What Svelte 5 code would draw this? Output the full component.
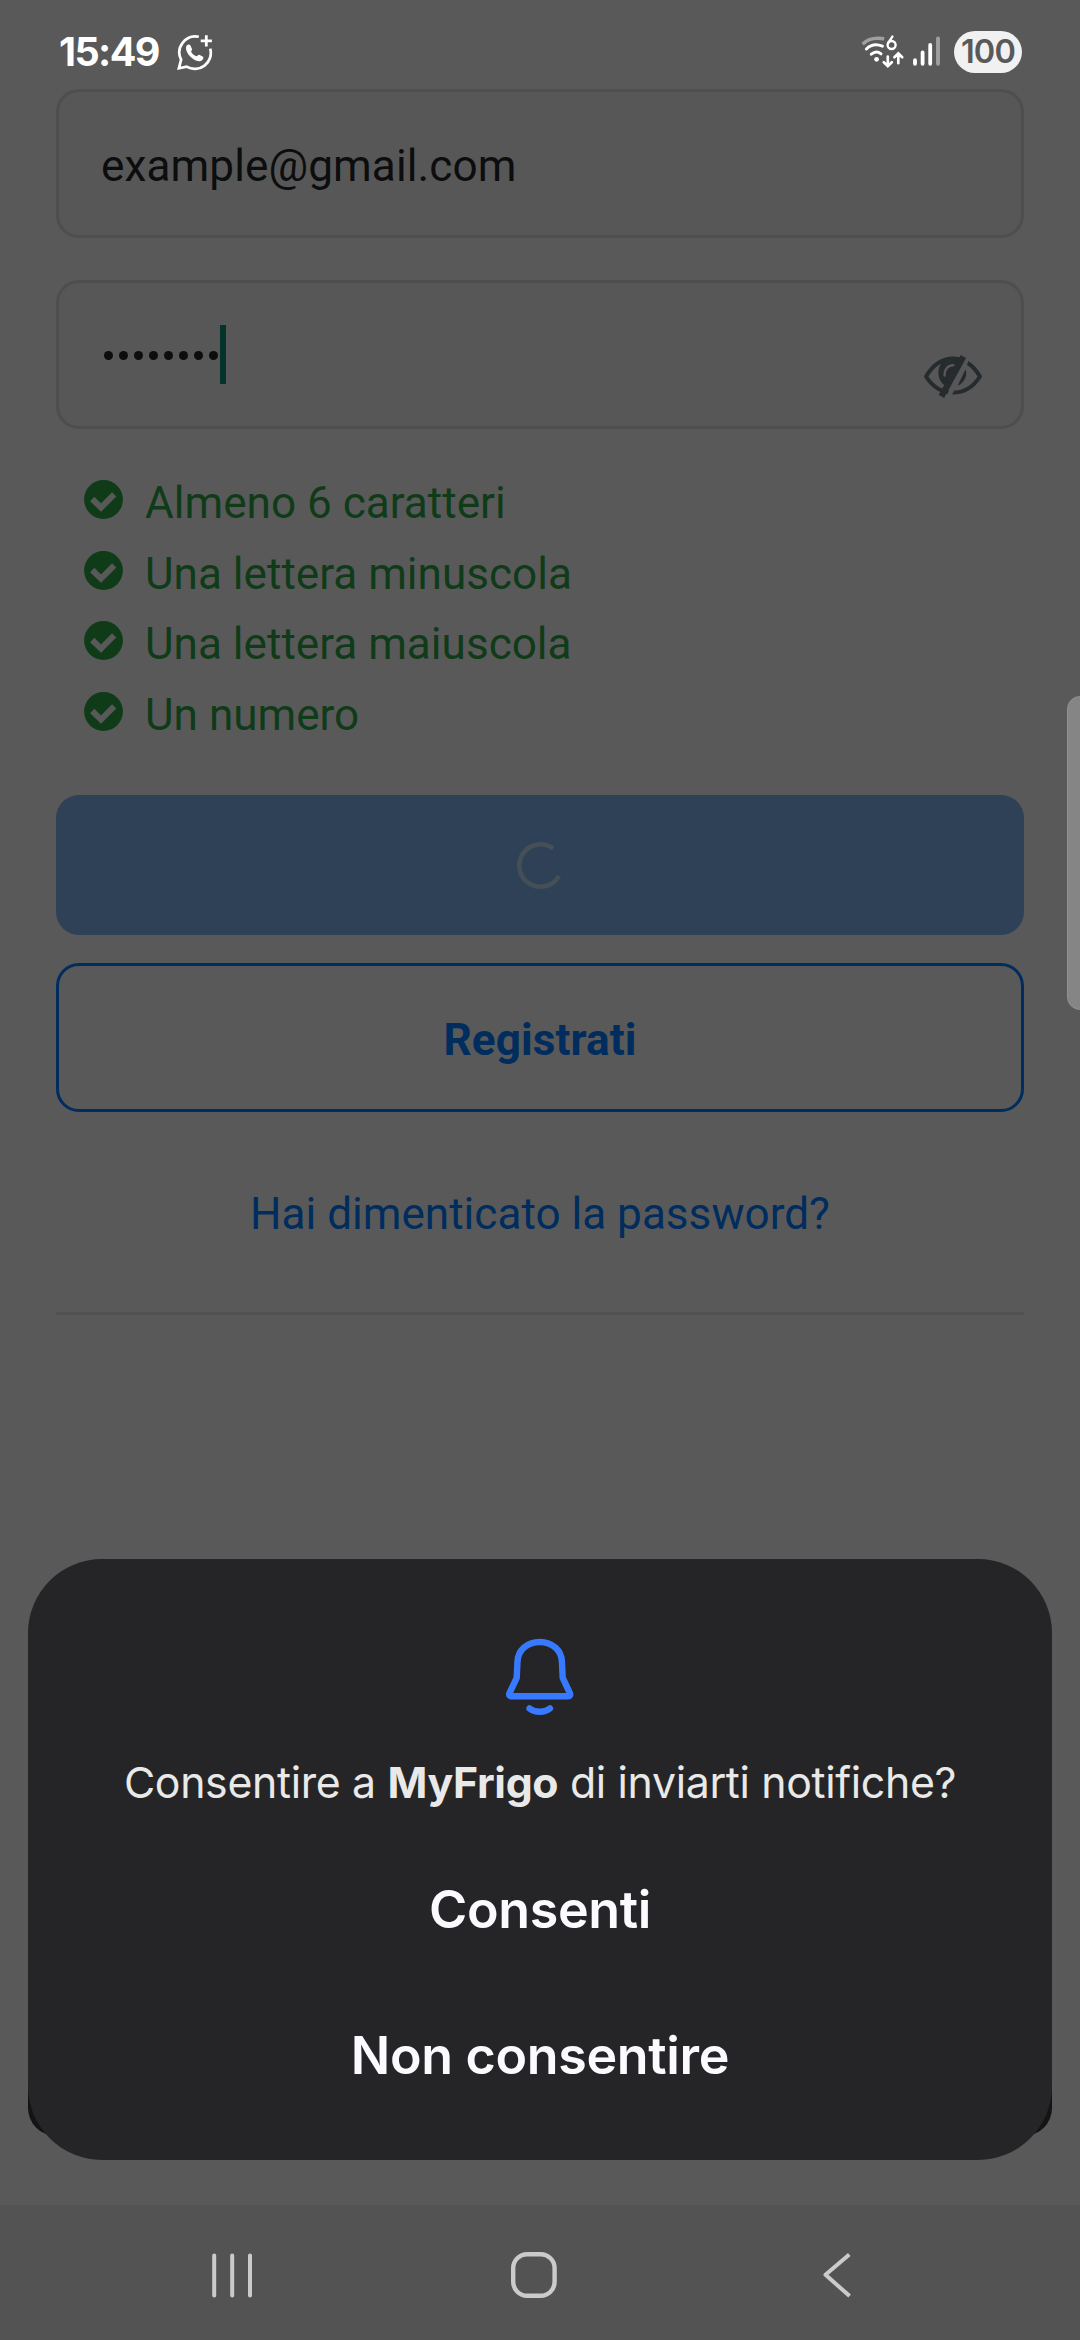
<script>
  const rules = ['Almeno 6 caratteri', 'Una lettera minuscola', 'Una lettera maiuscola', 'Un numero'];
  const dots = [0, 1, 2, 3, 4, 5, 6, 7];
</script>

<div class="screen">
  <header class="status">
    <div class="left">
      <span class="time">15:49</span>
      <svg class="wa" width="36" height="37" viewBox="0 0 36 37" fill="none">
        <path d="M21.8 2.8A16 16 0 0 0 4.1 25.6L1.9 34.3L9.6 32.7A16 16 0 0 0 33.2 14.6" stroke="#fff" stroke-width="2.7" />
        <path d="M29.3 1.3V12.5M23.7 6.9H34.9" stroke="#fff" stroke-width="2.8" />
        <path d="M9.7 11.6C10.7 10.3 12.3 10 13.3 11.2L15 15C15.3 16 13.9 17.3 14.2 18C15.6 20.2 17.4 21.5 19.3 22.2C20.2 22.4 21.3 20.4 22.4 20.8L26 22.7C27.1 23.6 25.9 26 24.3 26.8C20.6 28.5 16 25.5 13.4 22.8C10.5 19.9 7.7 15 9.7 11.6Z" fill="#fff" />
      </svg>
    </div>
    <div class="right">
      <svg width="84" height="38" viewBox="0 0 84 38" fill="none" stroke-linecap="round">
        <path d="M3.6 11.2C9 5.7 17 4.4 25.2 5.8" stroke="#a0a0a0" stroke-width="3.4" stroke-linecap="butt" />
        <path d="M7.4 16C12 11.5 18 11 23.4 13.2" stroke="#fff" stroke-width="3" />
        <path d="M12.3 21.2C15.8 18.3 19 18.4 22 20.9" stroke="#fff" stroke-width="3" />
        <circle cx="17.6" cy="26.3" r="2.4" fill="#fff" />
        <circle cx="32.6" cy="12" r="4" stroke="#fff" stroke-width="2.4" />
        <path d="M29.2 10L33.4 3.6" stroke="#fff" stroke-width="2.4" />
        <path d="M28.8 23.5V33M24.8 29.3L28.8 33.2L32.8 29.3M39.3 30.2V20.7M35.4 24.2L39.3 20.4L43.2 24.2" stroke="#fff" stroke-width="2.7" />
        <path d="M56 27.2V30.8M63.6 19.3V30.8M71.2 12V30.8" stroke="#fff" stroke-width="3.8" />
        <path d="M79 5.3V30.8" stroke="#a0a0a0" stroke-width="3.8" />
      </svg>
      <span class="battery">100</span>
    </div>
  </header>

  <main class="form">
    <div class="field email">example@gmail.com</div>
    <div class="field pass">
      <div class="dots">
        {#each dots as d (d)}<i></i>{/each}
      </div>
      <b class="caret"></b>
      <svg class="eye" width="58" height="46" viewBox="0 0 58 46">
        <path d="M2 22.5C9 11 18 4.6 29 4.6C40 4.6 49 11 56 22.5C49 33.5 40 38.6 29 38.6C18 38.6 9 33.5 2 22.5Z" fill="none" stroke="#262b2e" stroke-width="4" />
        <path d="M18.5 7.5C12 15 13.5 26 20.5 31.5L37 5Z" fill="#262b2e" />
        <path d="M20.6 21.5C20.3 15 24 11.3 29.5 11.2" fill="none" stroke="#595959" stroke-width="2.3" stroke-linecap="round" />
        <path d="M41.5 15.5C44 20 40.5 29.5 33.6 31.7Z" fill="#262b2e" />
        <path d="M43.8 3.5L24.2 43.5" stroke="#575757" stroke-width="4.6" />
        <path d="M39.4 2.4L17.4 42.6" stroke="#262b2e" stroke-width="6.2" />
      </svg>
    </div>

    <ul class="rules">
      {#each rules as rule (rule)}
        <li>
          <svg width="39" height="39" viewBox="0 0 39 39">
            <circle cx="19.5" cy="19.5" r="19.4" fill="#103b19" />
            <path d="M8.2 19L17 27.6L30.2 14.4" fill="none" stroke="#595959" stroke-width="6" />
          </svg>
          <span>{rule}</span>
        </li>
      {/each}
    </ul>

    <div class="primary">
      <svg width="48" height="48" viewBox="0 0 48 48" fill="none">
        <path d="M37.2 6.6A21.2 21.2 0 1 0 43 33.8" stroke="#454f57" stroke-width="4.6" />
      </svg>
    </div>
    <div class="outline">Registrati</div>
    <div class="forgot">Hai dimenticato la password?</div>
    <hr />
  </main>

  <nav class="nav">
    <svg width="1080" height="135" viewBox="0 0 1080 135" fill="none" stroke="#cbcbcb" stroke-width="4" stroke-linecap="round">
      <path d="M214.2 50.5V90.5M232.2 50.5V90.5M250 50.5V90.5" />
      <rect x="513.2" y="49.2" width="41.4" height="41.6" rx="14" stroke-width="4.4" />
      <path d="M849.3 49.5L825.5 69.8L849.6 91" stroke-linecap="butt" stroke-linejoin="round" />
    </svg>
  </nav>

  <span class="edge"></span>
  <div class="toast"></div>
  <section class="dialog">
    <svg width="72" height="82" viewBox="0 0 72 82" fill="none" stroke="#387aff" stroke-width="6.4" stroke-linecap="round" stroke-linejoin="round">
      <path d="M35.7 6C22.7 6 13.9 14.8 13.5 25.5L12.7 41.8L5.4 57.4C4.8 59.2 5.6 60.3 7.3 60.3H64.1C65.8 60.3 66.6 59.2 66 57.4L58.7 41.8L57.9 25.5C57.5 14.8 48.7 6 35.7 6Z" />
      <path d="M25.5 72.5C31.3 76.9 40.1 76.9 45.9 72.5" />
    </svg>
    <p class="question">Consentire a <strong>MyFrigo</strong> di inviarti notifiche?</p>
    <div class="action allow">Consenti</div>
    <div class="action deny">Non consentire</div>
  </section>
</div>

<style>
  .screen {
    position: relative;
    display: flex;
    flex-direction: column;
    width: 1080px;
    height: 2340px;
    overflow: hidden;
    background: #595959;
    font-family: Roboto, sans-serif;
    font-size: 44.1px;
    white-space: nowrap;
  }
  .screen * { box-sizing: border-box; }
  svg { display: block; flex: none; }
  .status {
    height: 89px;
    padding: 31px 58px 0 59px;
    display: flex;
    justify-content: space-between;
    font-family: Inter, sans-serif;
  }
  .left, .right { display: flex; height: 42px; align-items: center; }
  .time {
    width: 118px;
    color: #fff;
    font-size: 39.5px;
    font-weight: 700;
    letter-spacing: -1.6px;
    line-height: 42px;
  }
  .right { gap: 11px; }
  .battery {
    width: 68px;
    height: 42px;
    border-radius: 21px;
    background: #f1f1f1;
    color: #595959;
    font-size: 32.5px;
    font-weight: 600;
    line-height: 42px;
    text-align: center;
    letter-spacing: -0.9px;
  }
  .form {
    flex: 1;
    padding: 0 56px;
    display: flex;
    flex-direction: column;
  }
  .field {
    height: 149px;
    border: 3px solid #4d4e4f;
    border-radius: 23px;
    padding: 4px 39px 0 42px;
    display: flex;
    align-items: center;
    color: #0c0d0e;
    background: #575757;
  }
  .email { letter-spacing: 0.1px; }
  .pass { margin-top: 42px; padding-top: 0; }
  .dots { display: flex; gap: 6px; padding-left: 3px; margin-top: 2px; }
  .dots i { width: 9px; height: 9px; border-radius: 50%; background: #0c0d0e; }
  .caret { width: 6px; height: 59px; margin-left: 2px; background: #04332c; }
  .eye { margin: 44px 0 0 auto; }
  .rules {
    list-style: none;
    margin: 51px 0 0;
    padding: 0 0 0 28px;
  }
  li { display: flex; height: 70.5px; gap: 22px; color: #103b19; }
  li span { line-height: 47px; }
  .primary {
    height: 140px;
    margin-top: 33px;
    border-radius: 23px;
    background: #2e4157;
    display: flex;
    align-items: center;
    justify-content: center;
  }
  .primary svg { margin-top: 1px; }
  .outline {
    height: 149px;
    margin-top: 28px;
    padding-top: 3px;
    border: 3px solid #002d5d;
    border-radius: 23px;
    line-height: 143px;
    text-align: center;
    font-weight: 700;
    letter-spacing: 0.1px;
    color: #002d5d;
  }
  .forgot {
    margin-top: 76px;
    line-height: 52px;
    text-align: center;
    color: #002d5d;
  }
  hr { width: 100%; height: 3px; margin: 72px 0 0; border: 0; background: #505254; }
  .nav { height: 135px; background: #535353; }
  .edge {
    position: absolute;
    right: -14px;
    top: 696px;
    width: 27px;
    height: 314px;
    border-radius: 13px;
    border: 1px solid #929292;
    background: #858585;
  }
  .toast {
    position: absolute;
    left: 28px;
    right: 28px;
    bottom: 204px;
    height: 140px;
    border-radius: 28px;
    background: #141414;
  }
  .dialog {
    position: absolute;
    left: 28px;
    right: 28px;
    bottom: 180px;
    height: 601px;
    border-radius: 74px;
    padding-top: 77px;
    background: #252527;
    display: flex;
    flex-direction: column;
    align-items: center;
    font-family: Inter, sans-serif;
  }
  .question {
    margin: 38px 0 0;
    font-size: 42.8px;
    letter-spacing: -0.33px;
    line-height: 54px;
    color: #e9e9e9;
  }
  .action {
    font-size: 52px;
    font-weight: 600;
    letter-spacing: -0.35px;
    line-height: 70px;
    color: #fafaff;
  }
  .allow { margin-top: 65px; }
  .deny { margin-top: 76px; }
</style>
